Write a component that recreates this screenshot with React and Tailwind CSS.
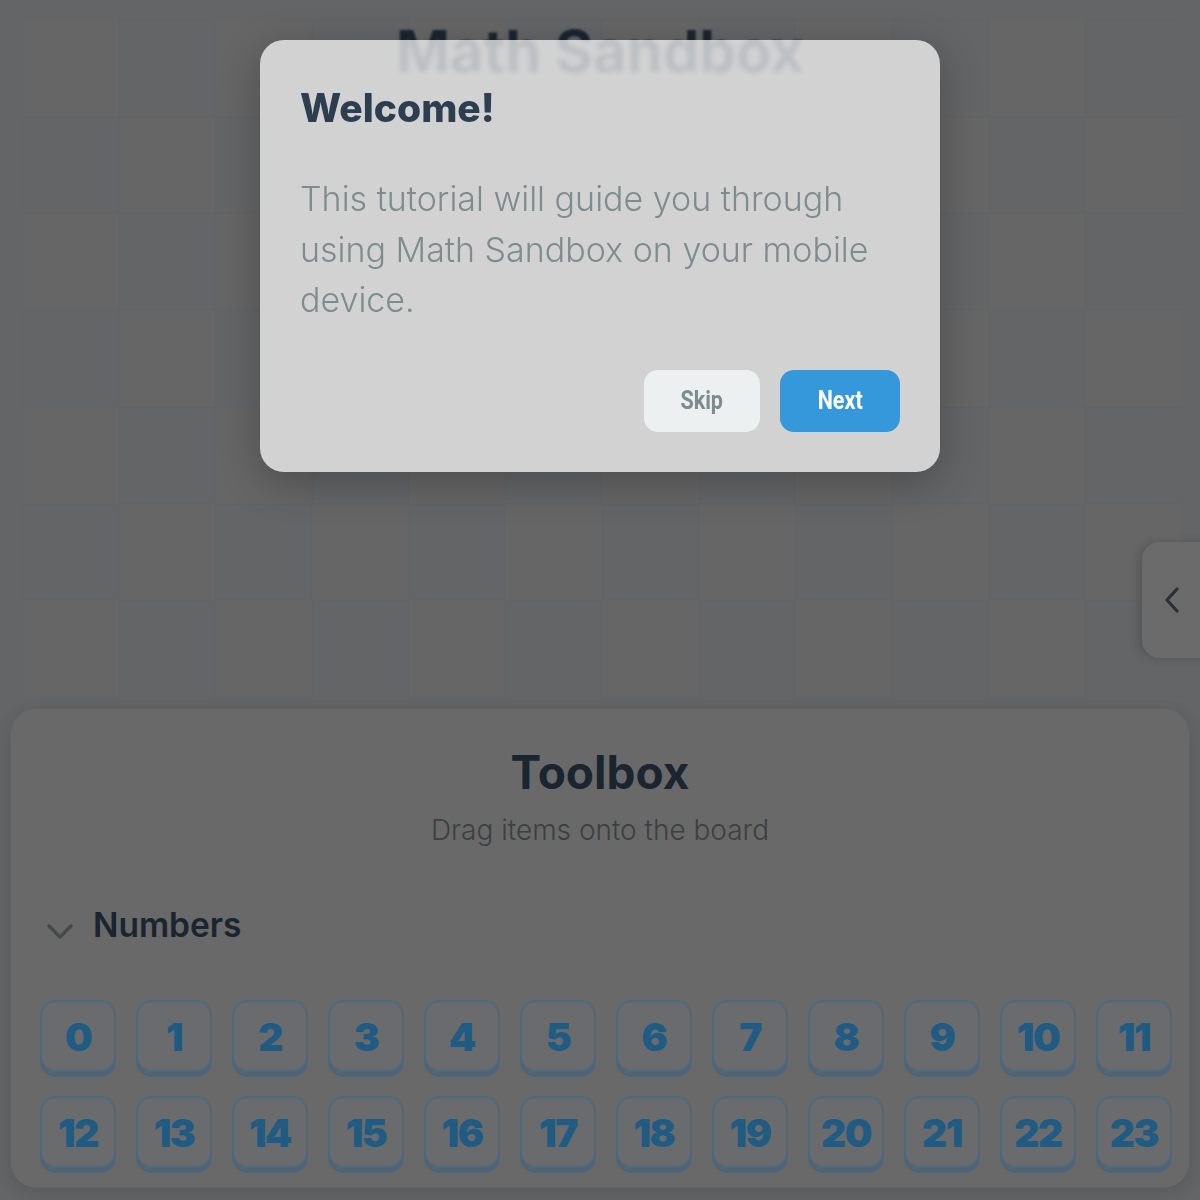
import React from "react";

const COLS = 12;
const ROWS = 7;

const Cell = ({ dark }) => (
  <div
    className={
      dark
        ? "bg-[#a5a8ab] border border-[#a2a5a8]"
        : "bg-[#ababab] border border-[#a8a8a8]"
    }
  />
);

const ChevronDown = () => (
  <svg width="28" height="20" viewBox="0 0 28 20" fill="none" className="shrink-0 mt-[12px]">
    <path d="M3 5l11 11L25 5" stroke="#727a7c" strokeWidth="3.4" strokeLinecap="round" strokeLinejoin="round" />
  </svg>
);

const ChevronLeft = () => (
  <svg width="16" height="26" viewBox="0 0 16 26" fill="none">
    <path d="M13 2L3 13l10 11" stroke="#4a4f55" strokeWidth="3.2" strokeLinecap="round" strokeLinejoin="round" />
  </svg>
);

const Tile = ({ n }) => (
  <div className="w-[76px] h-[72px] rounded-[16px] border-2 border-[#88aecb] bg-[#b0b2b5] shadow-[0_5px_0_#82a9c6] flex items-center justify-center">
    <span className="text-[39px] font-black text-[#3498db] tracking-[-1.5px] leading-none">{n}</span>
  </div>
);

const App = () => {
  const cells = [];
  for (let r = 0; r < ROWS; r++) {
    for (let c = 0; c < COLS; c++) {
      cells.push(<Cell key={`${r}-${c}`} dark={(r + c) % 2 === 1} />);
    }
  }
  const numbers = Array.from({ length: 24 }, (_, i) => i);

  return (
    <div className="relative w-full h-[1200px] overflow-hidden bg-[#a6a8aa] font-[Inter,'Noto_Sans',sans-serif]">
      {/* board */}
      <div className="pt-[20px] pl-[22px] pr-[18px]">
        <div className="grid grid-cols-12 grid-rows-7 w-[1160px] h-[677px]">{cells}</div>
      </div>

      <h1 className="absolute top-[22px] left-0 right-0 text-center text-[58px] leading-none font-bold text-[#2c3e50] blur-[1px]">
        Math Sandbox
      </h1>

      {/* side drawer tab */}
      <button className="absolute right-[-20px] top-[542px] w-[78px] h-[116px] rounded-[18px] bg-[#b3b3b3] shadow-[-4px_0_10px_rgba(0,0,0,0.15)] flex items-center pl-[22px]">
        <ChevronLeft />
      </button>

      {/* toolbox */}
      <div className="mx-[10px] mt-[11px] h-[480px] rounded-[26px] bg-[#afafaf] border border-[#a6a6a6] shadow-[0_4px_16px_rgba(0,0,0,0.12)] px-[29px] pt-[35px]">
        <h2 className="text-center text-[46px] font-bold text-[#2c3e50] leading-[56px]">Toolbox</h2>
        <p className="text-center text-[28px] font-light text-[#666b6b] leading-[42px] mt-[9px]">Drag items onto the board</p>
        <div className="flex items-center gap-[19px] mt-[54px] pl-[6px]">
          <ChevronDown />
          <span className="text-[33.5px] font-semibold text-[#2c3e50] leading-[40px]">Numbers</span>
        </div>
        <div className="grid grid-cols-[repeat(12,76px)] gap-x-[20px] gap-y-[24px] mt-[55px]">
          {numbers.map((n) => (
            <Tile key={n} n={n} />
          ))}
        </div>
      </div>

      {/* tutorial overlay */}
      <div className="absolute inset-0 bg-black/40 flex justify-center pt-[40px]">
        <div className="w-[680px] h-fit rounded-[24px] bg-white/[0.71] backdrop-blur-[2px] shadow-[0_10px_40px_rgba(0,0,0,0.25)] px-[40px] pt-[46px] pb-[40px]">
          <h3 className="text-[39px] font-extrabold text-[#2c3e50] leading-[44px]">Welcome!</h3>
          <p className="mt-[44px] text-[34px] font-light text-[#7f8c8d] leading-[50.5px]">
            This tutorial will guide you through using Math Sandbox on your mobile device.
          </p>
          <div className="flex justify-end gap-[20px] mt-[44px] font-['Roboto',sans-serif]">
            <button className="w-[116px] h-[62px] rounded-[14px] bg-[#ecf0f1] text-[#7f8c8d] text-[25px] font-bold">
              <span className="inline-block scale-x-[0.86]">Skip</span>
            </button>
            <button className="w-[120px] h-[62px] rounded-[14px] bg-[#3498db] text-white text-[25px] font-bold">
              <span className="inline-block scale-x-[0.86]">Next</span>
            </button>
          </div>
        </div>
      </div>
    </div>
  );
};

export default App;
